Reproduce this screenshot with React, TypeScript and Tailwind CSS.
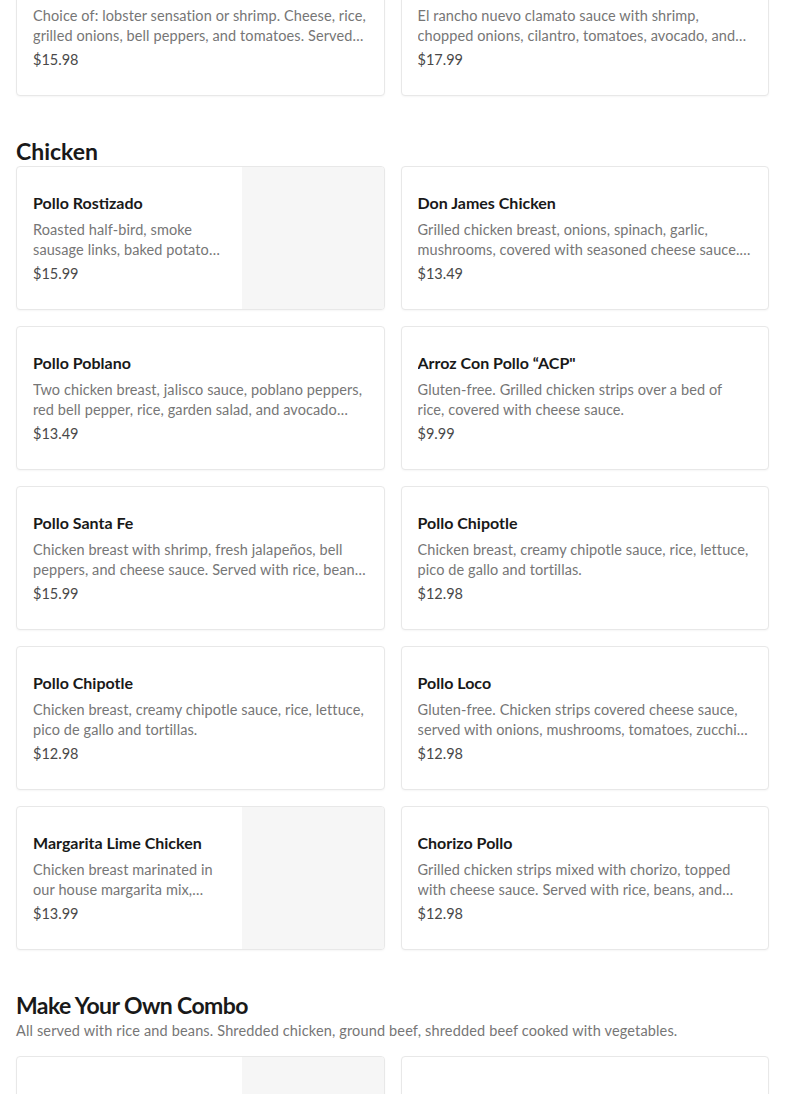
import React from 'react'

type Item = {
  name: string
  description: string
  price: string
  image?: boolean
}

const topItems: Item[] = [
  {
    name: 'Chimichanga Del Mar',
    description:
      'Choice of: lobster sensation or shrimp. Cheese, rice, grilled onions, bell peppers, and tomatoes. Served with beans and salad.',
    price: '$15.98',
  },
  {
    name: 'Campechana',
    description:
      'El rancho nuevo clamato sauce with shrimp, chopped onions, cilantro, tomatoes, avocado, and crackers.',
    price: '$17.99',
  },
]

const chicken: Item[] = [
  {
    name: 'Pollo Rostizado',
    description: 'Roasted half-bird, smoke sausage links, baked potato and salad.',
    price: '$15.99',
    image: true,
  },
  {
    name: 'Don James Chicken',
    description:
      'Grilled chicken breast, onions, spinach, garlic, mushrooms, covered with seasoned cheese sauce. Served with rice.',
    price: '$13.49',
  },
  {
    name: 'Pollo Poblano',
    description:
      'Two chicken breast, jalisco sauce, poblano peppers, red bell pepper, rice, garden salad, and avocado slices.',
    price: '$13.49',
  },
  {
    name: 'Arroz Con Pollo \u201cACP"',
    description: 'Gluten-free. Grilled chicken strips over a bed of rice, covered with cheese sauce.',
    price: '$9.99',
  },
  {
    name: 'Pollo Santa Fe',
    description:
      'Chicken breast with shrimp, fresh jalapeños, bell peppers, and cheese sauce. Served with rice, beans and tortillas.',
    price: '$15.99',
  },
  {
    name: 'Pollo Chipotle',
    description: 'Chicken breast, creamy chipotle sauce, rice, lettuce, pico de gallo and tortillas.',
    price: '$12.98',
  },
  {
    name: 'Pollo Chipotle',
    description: 'Chicken breast, creamy chipotle sauce, rice, lettuce, pico de gallo and tortillas.',
    price: '$12.98',
  },
  {
    name: 'Pollo Loco',
    description:
      'Gluten-free. Chicken strips covered cheese sauce, served with onions, mushrooms, tomatoes, zucchini and rice.',
    price: '$12.98',
  },
  {
    name: 'Margarita Lime Chicken',
    description: 'Chicken breast marinated in our house margarita mix, served with rice and beans.',
    price: '$13.99',
    image: true,
  },
  {
    name: 'Chorizo Pollo',
    description:
      'Grilled chicken strips mixed with chorizo, topped with cheese sauce. Served with rice, beans, and tortillas.',
    price: '$12.98',
  },
]

const combo: Item[] = [
  { name: 'Combo #1', description: 'Two tacos, one enchilada.', price: '$11.99', image: true },
  { name: 'Combo #2', description: 'One burrito, one enchilada.', price: '$11.99' },
]

const MenuCard: React.FC<{ item: Item }> = ({ item }) => (
  <div className="flex h-[144px] overflow-hidden rounded-[4px] border border-[#e8e8e8] bg-white shadow-[0_1px_2px_rgba(0,0,0,0.04)]">
    <div className="flex min-w-0 flex-1 flex-col justify-center pl-4 pr-4">
      <h3 className="truncate text-[16px] font-bold leading-[20px] text-[#191919]">
        {item.name}
      </h3>
      <p className="mt-[7px] line-clamp-2 text-[14.5px] leading-[20px] tracking-[0.1px] text-[#767676]">
        {item.description}
      </p>
      <p className="mt-[4px] text-[14.5px] leading-[20px] text-[#494949]">{item.price}</p>
    </div>
    {item.image && <div className="w-[142px] shrink-0 bg-[#f6f6f6]" />}
  </div>
)

const Grid: React.FC<{ items: Item[] }> = ({ items }) => (
  <div className="grid grid-cols-2 gap-4">
    {items.map((item, i) => (
      <MenuCard key={i} item={item} />
    ))}
  </div>
)

export default function App() {
  return (
    <div
      className="min-h-screen bg-white px-4"
      style={{ fontFamily: 'Lato, "Noto Sans", sans-serif' }}
    >
      <div className="mt-[-48px]">
        <Grid items={topItems} />

        {/* Chicken */}
        <section className="mt-[42px]">
          <h2 className="mb-[1px] text-[23px] font-bold leading-[27px] text-[#191919]">
            Chicken
          </h2>
          <Grid items={chicken} />
        </section>

        {/* Make Your Own Combo */}
        <section className="mt-[42px]">
          <h2 className="text-[23px] font-bold leading-[27px] tracking-[-0.6px] text-[#191919]">
            Make Your Own Combo
          </h2>
          <p className="mb-[15px] mt-[2px] text-[14.5px] leading-[20px] tracking-[0.15px] text-[#767676]">
            All served with rice and beans. Shredded chicken, ground beef, shredded beef cooked with vegetables.
          </p>
          <Grid items={combo} />
        </section>
      </div>
    </div>
  )
}
